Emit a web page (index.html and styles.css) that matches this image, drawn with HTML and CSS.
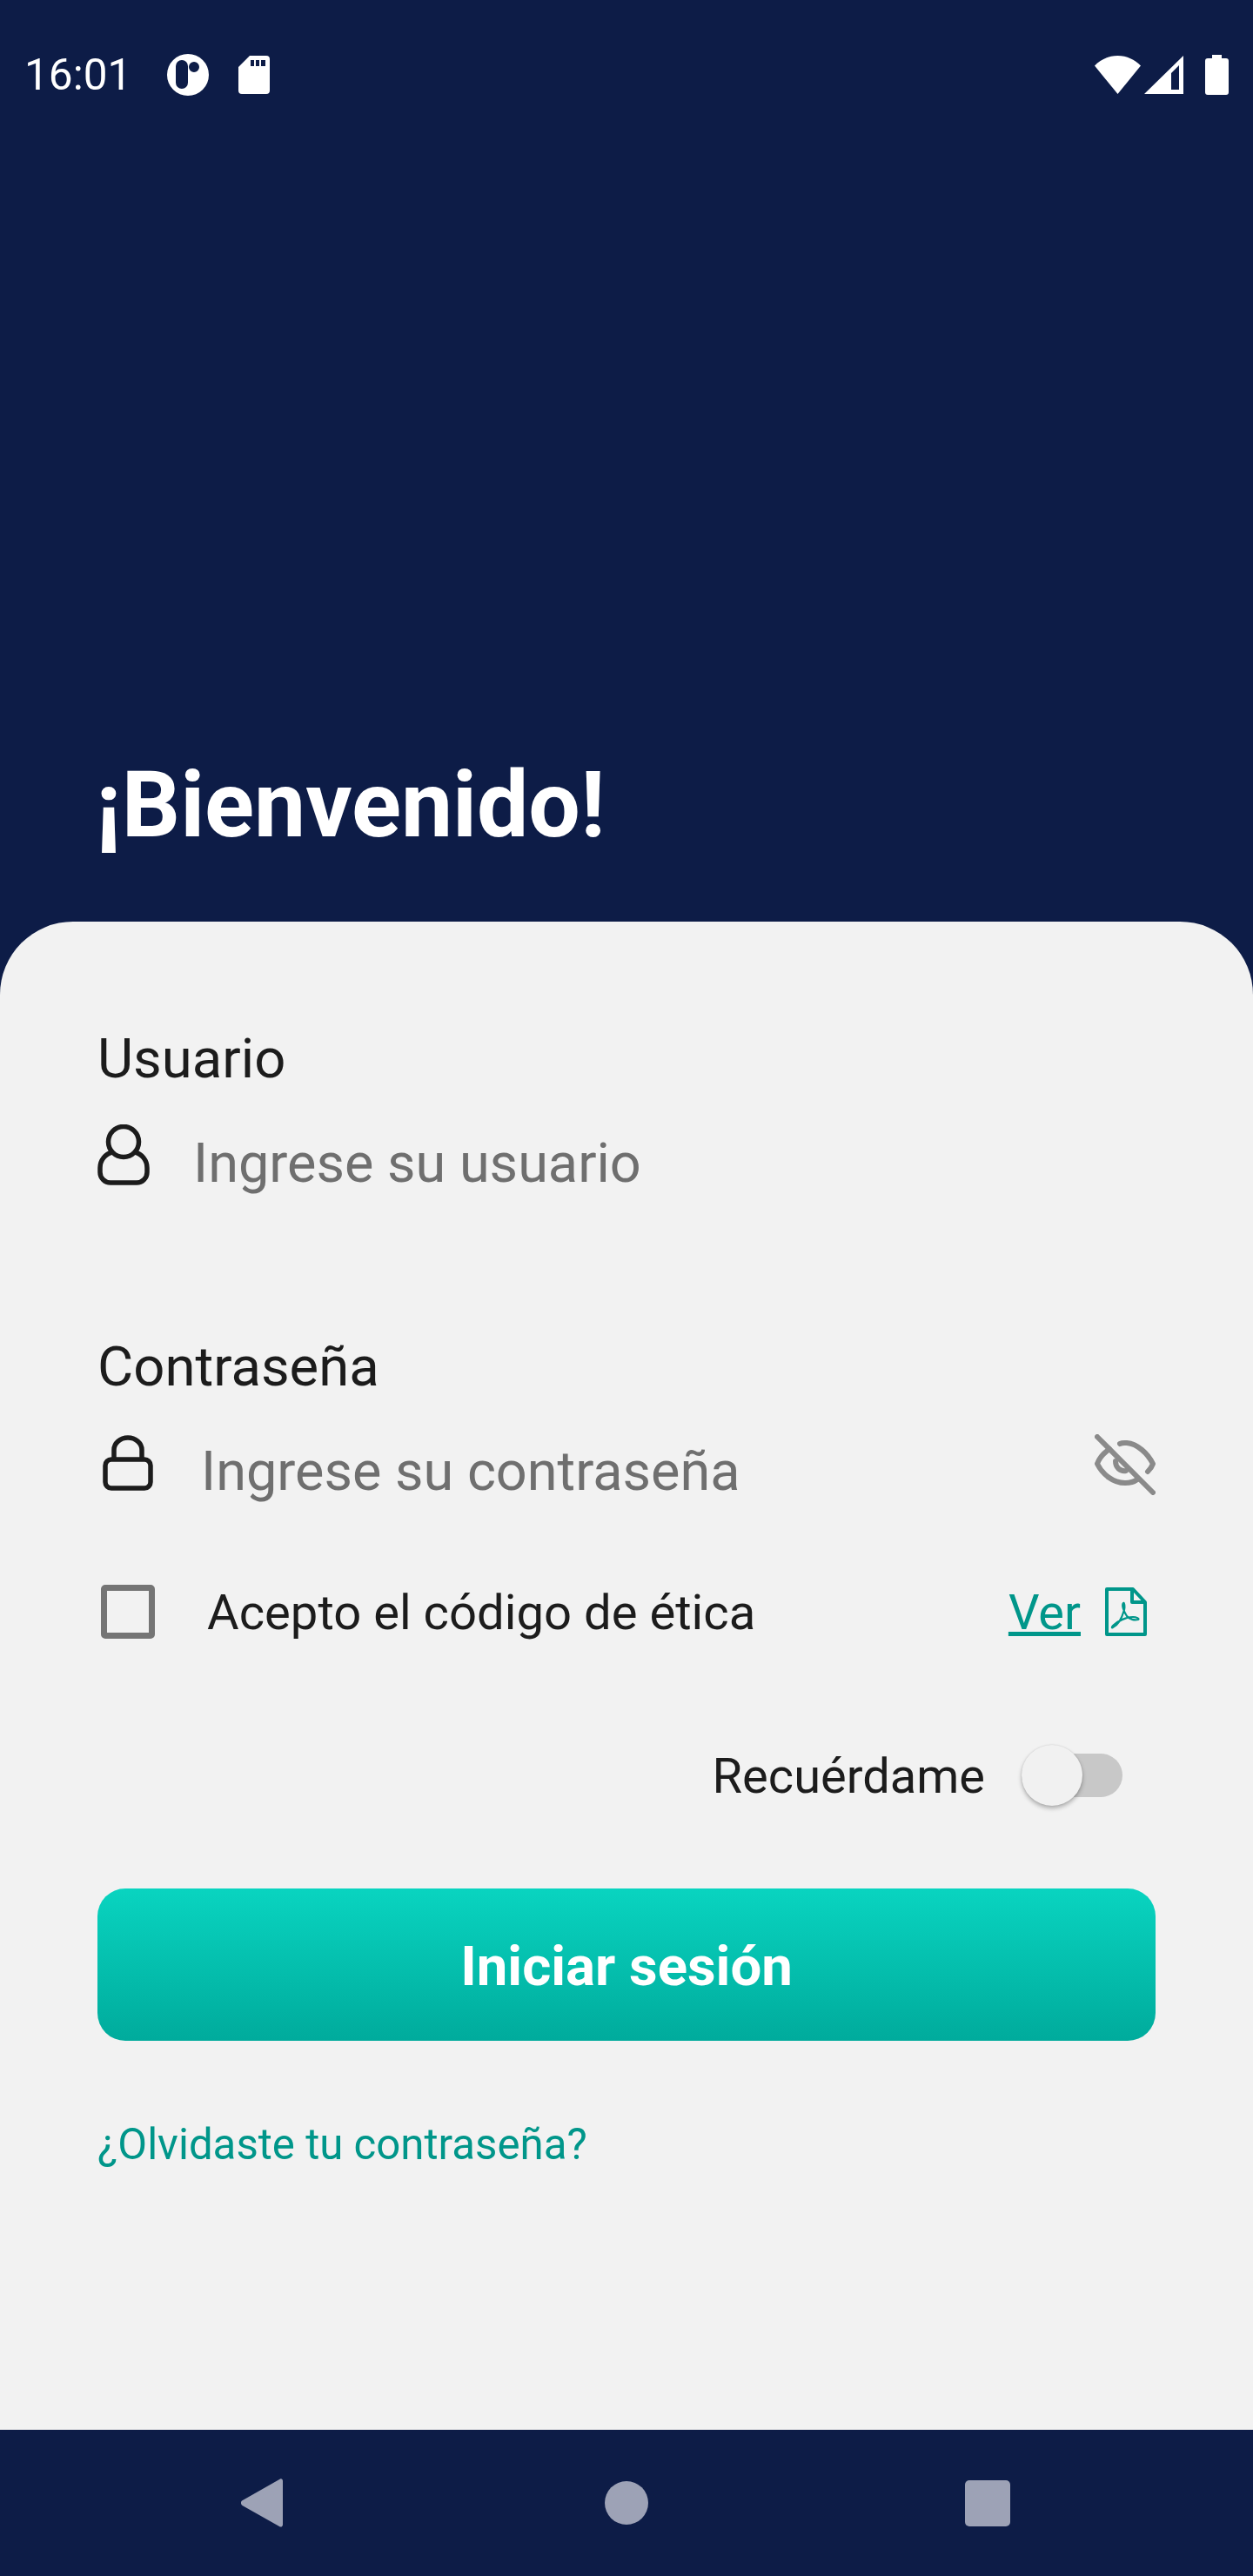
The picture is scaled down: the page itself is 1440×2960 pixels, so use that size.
FILE: index.html
```html
<!DOCTYPE html>
<html lang="es">
<head>
<meta charset="utf-8">
<title>Bienvenido</title>
<link rel="stylesheet" href="styles.css">
</head>
<body>
<div class="app">
  <header class="hero">
    <div class="status">
      <div class="status-left">
        <span class="time">16:01</span>
        <svg class="ic-logo" width="48" height="48" viewBox="0 0 48 48"><path fill="#fff" fill-rule="evenodd" d="M24 0a24 24 0 1 1 0 48a24 24 0 1 1 0-48ZM17 7a7 7 0 0 0-7 7V33a7 7 0 0 0 14 0V14a7 7 0 0 0-7-7ZM31 9a6 6 0 1 0 0 12a6 6 0 1 0 0-12Z"/></svg>
        <svg class="ic-sd" width="36" height="44" viewBox="0 0 36 44"><path fill="#fff" fill-rule="evenodd" d="M13 0H32a4 4 0 0 1 4 4V40a4 4 0 0 1-4 4H4a4 4 0 0 1-4-4V13ZM14 5V12H18V5ZM20 5V12H24V5ZM26 5V12H31V5Z"/></svg>
      </div>
      <div class="status-right">
        <svg class="ic-wifi" width="53" height="44" viewBox="0 0 53 44"><path fill="#fff" d="M26.500 44L0 11.500C7 4.500 16 0 26.500 0S46 4.500 53 11.500Z"/></svg>
        <svg class="ic-signal" width="45" height="44" viewBox="0 0 45 44"><path fill="#fff" fill-rule="evenodd" d="M45 0V44H0ZM31 20V39H40V11Z"/></svg>
        <svg class="ic-batt" width="27" height="46" viewBox="0 0 27 46"><path fill="#fff" d="M8 0H19V4H24a3 3 0 0 1 3 3V43a3 3 0 0 1-3 3H3a3 3 0 0 1-3-3V7a3 3 0 0 1 3-3H8Z"/></svg>
      </div>
    </div>
    <h1 class="title">¡Bienvenido!</h1>
  </header>
  <main class="sheet">
    <div class="label first">Usuario</div>
    <div class="input">
      <svg class="ic-user" width="60" height="70" viewBox="0 0 60 70"><g fill="none" stroke="#1c1c1c" stroke-width="5.500"><circle cx="30" cy="20" r="17.500"/><path d="M17 32C9 34 3 41 3 50V55A12 12 0 0 0 15 67H45A12 12 0 0 0 57 55V50C57 41 51 34 43 32"/></g></svg>
      <span class="placeholder">Ingrese su usuario</span>
    </div>
    <div class="label second">Contraseña</div>
    <div class="input">
      <svg class="ic-lock" width="58" height="64" viewBox="0 0 58 64"><g fill="none" stroke="#1c1c1c" stroke-width="5.500"><rect x="3" y="28" width="52" height="33" rx="7"/><path d="M13 28V17A16 14 0 0 1 45 17V28"/></g></svg>
      <span class="placeholder pass">Ingrese su contraseña</span>
      <svg class="ic-eye" width="70" height="70" viewBox="0 0 70 70"><g fill="none" stroke="#8a8a8a" stroke-width="6" stroke-linecap="round" stroke-linejoin="round"><path d="M3 3L67 67"/><path d="M17 17C10 22 5 28 3 34C9 46 21 56 35 56C40 56 45 55 49 52"/><path d="M29 11C32 9.500 34 10 37 10C49 11 61 22 67 34C66 37 64 40 61 43"/><path d="M24 31C24 38 29 43 36 42"/></g></svg>
    </div>
    <div class="check-row">
      <span class="checkbox"></span>
      <span class="check-text">Acepto el código de ética</span>
      <a class="ver">Ver</a>
      <svg class="ic-pdf" width="48" height="56" viewBox="0 0 48 56"><g fill="none" stroke="#00968a"><path stroke-width="4" stroke-linejoin="round" d="M2 2H32L46 17V54H2Z"/><path stroke-width="4" stroke-linejoin="round" d="M31 2V17H46"/><path stroke-width="2.200" d="M9 46C14 44 19 36 22 26C23 22 22 17 21 18C19 20 21 27 25 33C28 37 34 38 38 37C40 36 36 34 32 34C24 34 14 39 9 44C7 46 8 47 9 46Z"/></g></svg>
    </div>
    <div class="remember-row">
      <span class="remember-text">Recuérdame</span>
      <span class="switch"><span class="knob"></span></span>
    </div>
    <button class="login">Iniciar sesión</button>
    <a class="forgot">¿Olvidaste tu contraseña?</a>
  </main>
  <nav class="navbar">
    <svg width="48" height="56" viewBox="0 0 48 56"><path fill="#9da2b6" d="M45 0.500C46.800 0 48 1 48 3V53C48 55 46 56.500 44 55L1.500 31C-0.500 29.500 -0.500 27 1 25.500Z"/></svg>
    <svg class="nav-home" width="50" height="50" viewBox="0 0 50 50"><circle cx="25" cy="25" r="25" fill="#9da2b6"/></svg>
    <svg width="52" height="53" viewBox="0 0 52 53"><rect width="52" height="53" rx="5" fill="#9da2b6"/></svg>
  </nav>
</div>
</body>
</html>
```
FILE: styles.css
```css
* { box-sizing: border-box; }
html, body { margin: 0; padding: 0; }
body { font-family: Roboto, "Liberation Sans", sans-serif; background: #0d1c47; }
.app { width: 1440px; height: 2960px; display: flex; flex-direction: column; overflow: hidden; }

.hero { height: 1059px; background: #0d1c47; display: flex; flex-direction: column; padding-bottom: 78px; }
.status { display: flex; justify-content: space-between; align-items: center; padding: 62px 28px 0 28px; height: 110px; color: #fff; }
.status-left, .status-right { display: flex; align-items: center; }
.time { font-size: 49.500px; line-height: 48px; width: 164px; }
.ic-sd { margin-left: 34px; }
.ic-signal { margin-left: 4px; }
.ic-batt { margin-left: 25px; }
.title { margin: auto 0 0 110px; font-size: 105.500px; line-height: 112px; font-weight: 700; color: #fff; }

.sheet { flex: 1; background: #f2f2f2; border-radius: 84px 84px 0 0; padding: 122px 112px 0; display: flex; flex-direction: column; }
.label { font-size: 63.400px; line-height: 70px; color: #1c1c1c; }
.second { margin-top: 158px; }
.input { height: 80px; margin-top: 46px; display: flex; align-items: center; }
.placeholder { font-size: 63px; line-height: 80px; color: #6f6f6f; margin-left: 50px; }
.placeholder.pass { margin-left: 55px; }
.ic-user { margin-top: -20px; }
.ic-lock { margin: -20px 0 0 6px; }
.ic-eye { margin: -17px 0 0 auto; }

.check-row { height: 70px; margin-top: 86px; display: flex; align-items: center; }
.checkbox { width: 62px; height: 62px; margin-left: 4px; border: 7px solid #757575; border-radius: 5px; }
.check-text { font-size: 56.200px; line-height: 70px; color: #1c1c1c; margin-left: 60px; padding-top: 2px; }
.ver { font-size: 56px; line-height: 70px; color: #00968a; text-decoration: underline; margin-left: auto; padding-top: 2px; }
.ic-pdf { margin: 0 10px 0 28px; }

.remember-row { height: 80px; margin-top: 113px; display: flex; align-items: center; justify-content: flex-end; padding-right: 38px; }
.remember-text { font-size: 56px; line-height: 70px; color: #1c1c1c; margin-right: 42px; padding-top: 2px; }
.switch { position: relative; width: 116px; height: 50px; border-radius: 25px; background: #c8c8c8; }
.knob { position: absolute; left: 0; top: -10px; width: 70px; height: 70px; border-radius: 50%; background: #f1f1f1; box-shadow: 0 3px 5px rgba(0,0,0,.28), 0 0 2px rgba(0,0,0,.12); }

.login { display: block; width: 100%; height: 175px; margin-top: 90px; border: 0; border-radius: 32px; background: linear-gradient(180deg, #09d4c0, #00ab9c); color: #fff; font-family: inherit; font-size: 63.500px; font-weight: 700; padding: 3px 0 0; }
.forgot { margin-top: 84px; font-size: 49.200px; line-height: 70px; color: #00968a; }

.navbar { height: 168px; background: #0d1c47; display: flex; align-items: center; padding: 0 279px 0 277px; justify-content: space-between; }
.nav-home { margin-left: 6px; }
```
